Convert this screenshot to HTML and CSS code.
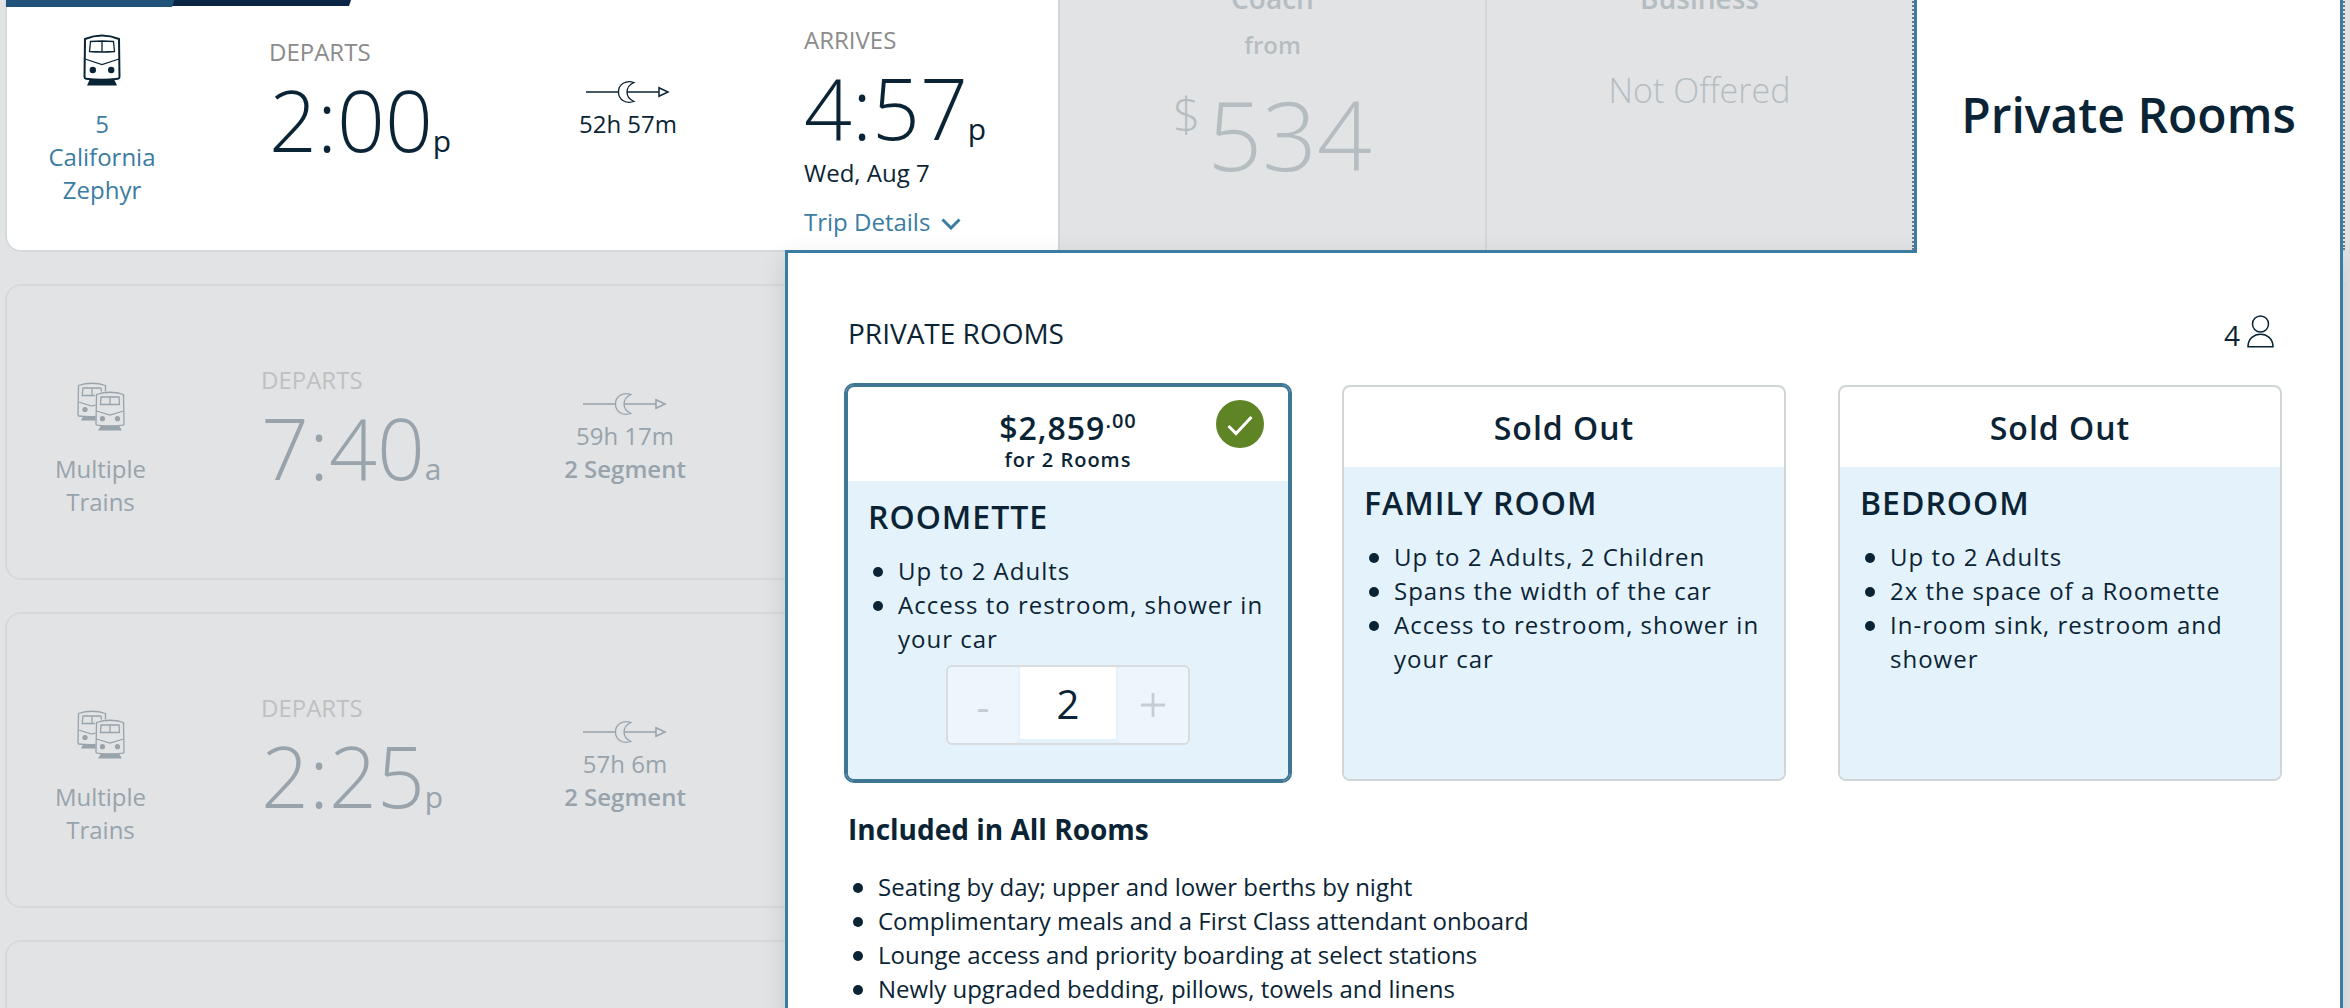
FILE: index.html
```html
<!DOCTYPE html>
<html lang="en">
<head>
<meta charset="utf-8">
<title>Select Your Train</title>
<link rel="stylesheet" href="styles.css">
</head>
<body>
<svg class="sprite" aria-hidden="true">
  <symbol id="train" viewBox="0 0 38 52">
    <path d="M2 5Q19-2 36 5L36.500 43Q36.500 44.500 35 44.700Q19 47 3 44.700Q1.500 44.500 1.500 43Z" fill="none" stroke="currentColor" stroke-width="2"/>
    <path d="M7.500 7.500Q19 6.500 30.500 7.500L31.500 17.500Q19 18.500 6.500 17.500ZM19 7V18M2 25L19 30.500L36 25" fill="none" stroke="currentColor" stroke-width="1.300"/>
    <circle cx="9.800" cy="36" r="3.200" fill="currentColor"/><circle cx="28.200" cy="36" r="3.200" fill="currentColor"/>
    <path d="M7 45H31L34 51.500H4Z" fill="currentColor"/>
  </symbol>
  <symbol id="trains" viewBox="0 0 48 49">
    <g fill="none" stroke="currentColor" stroke-width="1.300">
      <path d="M18.500 34.500Q9 35 2 34Q1 34 1 33L1.500 3.500Q15-1 28.500 3.500V9.500"/>
      <path d="M24 6H6Q5.500 10 5.200 13.500H18M15 6V13.500M24 6L24.500 9.500M1.500 20L15 24L18.500 23"/>
      <path d="M19.500 12.500Q33 8 46.500 12.500L47 42Q47 43 46 43.200Q33 45 20 43.200Q19 43 19 42Z"/>
      <path d="M24 15H42L42.500 22.500H23.500ZM33 15V22.500M19.500 29L33 33L46.500 29"/>
    </g>
    <g fill="currentColor"><circle cx="8" cy="27.500" r="2.600"/><circle cx="25.500" cy="36.700" r="2.600"/><circle cx="40.500" cy="36.700" r="2.600"/><path d="M6 34.500H18.500V38.500H4ZM24 43.500H42L45 48.500H21Z"/></g>
  </symbol>
  <symbol id="overnight" viewBox="0 0 84 24">
    <g fill="none" stroke="currentColor"><path d="M0 12H32M41 12H73" stroke-width="1.500"/><path d="M48 2.500C40 0 32.500 4 32.500 12S40 24 48 21.500C43.500 19.500 41 16 41 12S43.500 4.500 48 2.500Z" stroke-width="1.300"/><path d="M73 7.800V16.200L82 12Z" stroke-width="1.500"/></g>
  </symbol>
</svg>
<main class="page">
  <section class="trip trip-active">
    <div class="ribbon"><span class="ribbon-navy"></span><span class="ribbon-blue"></span></div>
    <div class="info">
      <div class="train"><svg class="icon-train"><use href="#train"/></svg><a href="#train-5">5<br>California<br>Zephyr</a></div>
      <div class="departs"><span class="label">DEPARTS</span><span class="time">2:00<small>p</small></span></div>
      <div class="duration"><svg class="icon-night"><use href="#overnight"/></svg><span>52h 57m</span></div>
      <div class="arrives"><span class="label">ARRIVES</span><span class="time">4:57<small>p</small></span><span>Wed, Aug 7</span>
        <a class="details" href="#details">Trip Details <svg class="chevron" viewBox="0 0 20 12"><path d="M1.500 1.500L10 10L18.500 1.500" fill="none" stroke="currentColor" stroke-width="3"/></svg></a></div>
    </div>
    <div class="fare"><span class="fare-name">Coach</span><span class="fare-from">from</span><span class="fare-price"><sup>$</sup>534</span></div>
    <div class="fare"><span class="fare-name">Business</span><span class="fare-none">Not Offered</span></div>
    <div class="tab-cell"><button class="tab" type="button">Private Rooms</button></div>
    <section class="panel">
      <header class="panel-head"><h2>PRIVATE ROOMS</h2>
        <span class="travelers">4 <svg class="person" viewBox="0 0 27 33"><g fill="none" stroke="currentColor" stroke-width="1.500"><circle cx="13.500" cy="9" r="8"/><path d="M1 31.800C1 15 26 15 26 31.800Z"/></g></svg></span></header>
      <div class="rooms">
        <article class="room room-selected">
          <div class="room-top"><span class="price">$2,859<sup>.00</sup></span><span class="per">for 2 Rooms</span>
            <svg class="check" viewBox="0 0 48 48"><circle cx="24" cy="24" r="24" fill="#5f8426"/><path d="M12.500 26L20 33.500L35.500 17" fill="none" stroke="#fff" stroke-width="3"/></svg></div>
          <div class="room-body"><h3>ROOMETTE</h3>
            <ul><li>Up to 2 Adults</li><li>Access to restroom, shower in your car</li></ul>
            <div class="stepper"><button type="button" aria-label="Fewer rooms" disabled>-</button><input type="text" value="2" aria-label="Rooms"><button type="button" aria-label="More rooms" disabled><svg class="plus" viewBox="0 0 26 26"><path d="M0 13H26M13 0V26" stroke="currentColor" stroke-width="3"/></svg></button></div></div>
        </article>
        <article class="room">
          <div class="room-top"><span class="price">Sold Out</span></div>
          <div class="room-body"><h3>FAMILY ROOM</h3>
            <ul><li>Up to 2 Adults, 2 Children</li><li>Spans the width of the car</li><li>Access to restroom, shower in your car</li></ul></div>
        </article>
        <article class="room">
          <div class="room-top"><span class="price">Sold Out</span></div>
          <div class="room-body"><h3>BEDROOM</h3>
            <ul><li>Up to 2 Adults</li><li>2x the space of a Roomette</li><li>In-room sink, restroom and shower</li></ul></div>
        </article>
      </div>
      <div class="included"><h4>Included in All Rooms</h4>
        <ul><li>Seating by day; upper and lower berths by night</li><li>Complimentary meals and a First Class attendant onboard</li><li>Lounge access and priority boarding at select stations</li><li>Newly upgraded bedding, pillows, towels and linens</li></ul></div>
    </section>
  </section>
  <section class="trip">
    <div class="info">
      <div class="train"><svg class="icon-trains"><use href="#trains"/></svg><span>Multiple<br>Trains</span></div>
      <div class="departs"><span class="label">DEPARTS</span><span class="time">7:40<small>a</small></span></div>
      <div class="duration"><svg class="icon-night"><use href="#overnight"/></svg><span>59h 17m</span><strong>2 Segment</strong></div>
    </div>
  </section>
  <section class="trip">
    <div class="info">
      <div class="train"><svg class="icon-trains"><use href="#trains"/></svg><span>Multiple<br>Trains</span></div>
      <div class="departs"><span class="label">DEPARTS</span><span class="time">2:25<small>p</small></span></div>
      <div class="duration"><svg class="icon-night"><use href="#overnight"/></svg><span>57h 6m</span><strong>2 Segment</strong></div>
    </div>
  </section>
  <section class="trip"></section>
</main>
</body>
</html>
```
FILE: styles.css
```css
* { box-sizing: border-box; }
body {
  margin: 0;
  background: #e1e3e5;
  color: #0a2435;
  font: 24px/33px "Open Sans", sans-serif;
}
h2, h3, h4, ul { margin: 0; padding: 0; }
a { color: #3b7ca3; text-decoration: none; }
button, input { font: inherit; color: inherit; }
svg { display: block; flex: none; }
.sprite { position: absolute; width: 0; height: 0; }

/* scrolled list of trips */
.page { height: 100vh; overflow: hidden; }
.trip {
  position: relative;
  display: grid;
  grid-template-columns: 1051fr 427fr 427fr 433fr;
  min-height: 296px;
  margin: 0 5px 32px;
  border: 2px solid #d6d9db;
  border-right: 0;
  border-radius: 16px 0 0 16px;
  color: #98a3ab;
}
.trip-active { margin-top: -44px; color: #0a2435; z-index: 1; }
.info {
  display: grid;
  grid-template-columns: 187fr 327fr 208fr 329fr;
  align-items: start;
}
.trip-active .info { grid-template-columns: 190fr 327fr 208fr 326fr; background: #fff; border-radius: 14px 0 0 14px; }
.info > div { display: flex; flex-direction: column; }
.label { color: #bfc0c2; }
.trip-active .label { color: #8b8b8b; }
.train, .duration { align-items: center; text-align: center; }
.train { gap: 21px; padding-top: 96px; }
.trip-active .train { padding-top: 76px; }
.departs { padding: 77px 0 0 67px; }
.trip-active .departs { padding-left: 72px; }
.duration { padding-top: 106px; }
.trip-active .duration { padding-top: 122px; }
.arrives { padding: 65px 0 0 72px; }
.duration strong { font-weight: 600; }
.time { margin-top: 4px; font-size: 84px; line-height: 96px; font-weight: 300; white-space: nowrap; }
.time small { font-size: 30px; line-height: 32px; font-weight: 400; }
.icon-train { width: 38px; height: 52px; }
.icon-trains { width: 48px; height: 49px; }
.icon-night { width: 84px; height: 24px; margin-bottom: 3px; }
.details { display: flex; align-items: center; gap: 11px; margin-top: 16px; }
.chevron { width: 20px; height: 12px; margin-top: 4px; }

.ribbon { position: absolute; top: -2px; left: -1px; width: 360px; height: 51px; }
.ribbon span { position: absolute; top: 0; left: 0; }
.ribbon-blue { width: 183px; height: 51px; background: #21527a; clip-path: polygon(0 0, 100% 0, 166px 100%, 0 100%); }
.ribbon-navy { width: 360px; height: 50px; background: #0a2445; clip-path: polygon(0 0, 100% 0, 343px 100%, 0 100%); }

.fare {
  display: flex;
  flex-direction: column;
  align-items: center;
  border-left: 2px solid #d3d6d8;
  color: #b5bdc1;
  padding-top: 22px;
}
.fare-name { font-size: 28px; line-height: 36px; font-weight: 600; }
.fare-from { font-weight: 600; margin-top: 12px; }
.fare-price { display: flex; margin-top: 13px; font-size: 96px; line-height: 120px; font-weight: 300; }
.fare-price sup { font-size: 48px; line-height: 80px; margin-right: 7px; }
.fare-none { margin-top: 50px; font-size: 34px; line-height: 48px; font-weight: 300; }

.tab-cell { position: relative; z-index: 3; display: flex; border: 2px dotted #777; border-width: 0 2px; }
.tab {
  flex: 1;
  margin-bottom: -3px;
  padding: 18px 0 0;
  border: solid #3b7ca3;
  border-width: 0 3px;
  background: #fff;
  font-size: 48px;
  line-height: 60px;
  font-weight: 600;
  white-space: nowrap;
}

/* room picker opened under the selected tab */
.panel {
  position: absolute;
  z-index: 2;
  top: 100%;
  left: 778px;
  right: 2px;
  padding: 60px 58px 100px;
  background: #fff;
  border: 3px solid #3b7ca3;
  box-shadow: 0 8px 24px rgba(0, 0, 0, 0.12);
}
.panel-head { display: flex; justify-content: space-between; height: 44px; padding: 0 8px 0 2px; }
.panel-head h2 { font-size: 28px; line-height: 40px; font-weight: 400; }
.travelers { display: flex; gap: 7px; font-size: 28px; line-height: 44px; }
.person { width: 27px; height: 33px; margin-top: 2px; }
.rooms { display: grid; grid-template-columns: repeat(3, 1fr); gap: 52px; margin-top: 28px; }
.room {
  display: flex;
  flex-direction: column;
  min-height: 396px;
  border: 2px solid #d0d6d8;
  border-radius: 8px;
  overflow: hidden;
  letter-spacing: 1px;
}
.room-selected { border-color: #3f7694; outline: 2px solid #3f7694; }
.room-top { position: relative; display: flex; flex-direction: column; align-items: center; padding: 21px 0 19px; }
.room-selected .room-top { padding-bottom: 9px; }
.price { font-size: 32px; line-height: 40px; font-weight: 600; }
.price sup { font-size: 20px; line-height: 20px; }
.per { font-size: 20px; line-height: 24px; font-weight: 600; }
.check { position: absolute; top: 13px; right: 24px; width: 48px; height: 48px; }
.room-body { flex: 1; padding: 16px 20px 32px; background: #e4f2fb; }
h3 { font-size: 32px; line-height: 40px; font-weight: 600; }
ul { list-style: none; }
li { position: relative; padding-left: 30px; line-height: 34px; }
li::before { content: ""; position: absolute; left: 5px; top: 13px; width: 10px; height: 10px; border-radius: 50%; background: #0a2435; }
.room ul { margin-top: 17px; }
.stepper { display: grid; grid-template-columns: 1fr 96px 1fr; gap: 2px; width: 244px; height: 80px; margin: 9px auto 0; border: 2px solid #d9dcde; border-radius: 6px; }
.stepper button { display: flex; align-items: center; justify-content: center; padding: 0; border: 0; background: #edf5fd; color: #c4cdd2; font-size: 40px; border-radius: 4px; }
.plus { width: 24px; height: 24px; }
.stepper input { width: 100%; height: 72px; padding: 0; border: 0; background: #fff; text-align: center; font-size: 40px; }
.included { padding-left: 2px; }
h4 { margin-top: 28px; font-size: 28px; line-height: 40px; font-weight: 700; }
.included ul { margin-top: 21px; }
```
